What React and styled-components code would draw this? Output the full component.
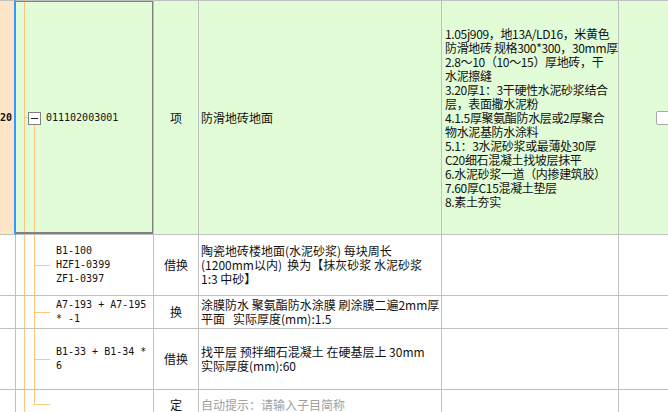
import React from "react";
import styled, { createGlobalStyle, css } from "styled-components";

const GlobalStyle = createGlobalStyle`
  html, body {
    margin: 0;
    padding: 0;
    background: #ffffff;
    overflow: hidden;
  }
  body {
    font-family: "Noto Sans CJK SC", "Liberation Sans", sans-serif;
    font-size: 12px;
    color: #111;
  }
`;

const GRID = "#c0c0c0";
const TREE = "#ffc77d";
const GREEN = "#e1fcd7";

const Sheet = styled.div`
  width: 700px;
  display: flex;
  flex-direction: column;
`;

const Row = styled.div`
  display: grid;
  grid-template-columns: 16px 138px 45px 243px 177px 81px;
  height: ${p => p.$h}px;
  background: ${p => (p.$current ? GREEN : "#ffffff")};
`;

const Cell = styled.div`
  box-sizing: border-box;
  border-right: 1px solid ${GRID};
  border-bottom: 1px solid ${GRID};
  border-top: ${p => (p.$top ? `1px solid ${GRID}` : "none")};
  display: flex;
  align-items: center;
  overflow: hidden;
  line-height: 14px;
  white-space: pre;
`;

const NumCell = styled(Cell)`
  justify-content: flex-end;
  padding-right: 2px;
  font-family: "DejaVu Sans Mono", monospace;
  font-size: 10px;
  font-weight: bold;
  ${p =>
    p.$current &&
    css`
      background: #ffe5c7;
      border-right: 2px solid #3399ff;
    `}
`;

const line = (x, y, w, h) =>
  `linear-gradient(${TREE}, ${TREE}) ${x} ${y} / ${w} ${h} no-repeat`;

const CodeCell = styled(Cell)`
  position: relative;
  font-family: "DejaVu Sans Mono", "Noto Sans CJK SC", monospace;
  font-size: 10px;
  padding-left: ${p => (p.$parent ? 12 : 40)}px;
  background: ${p =>
    p.$parent
      ? [
          line("8px", "0", "1px", "100%"),
          line("18px", "123px", "1px", "100%"),
          line("8px", "116px", "4px", "1px"),
        ].join(", ")
      : [
          line("8px", "0", "1px", "100%"),
          line("18px", "0", "1px", p.$last ? "50%" : "100%"),
          line("18px", "50%", "16px", "1px"),
        ].join(", ")};
  ${p =>
    p.$selected &&
    css`
      &::after {
        content: "";
        position: absolute;
        left: 0;
        top: -1px;
        right: -1px;
        bottom: 0;
        border: 2px solid #808080;
        border-left: none;
      }
    `}
`;

const ExpandBox = styled.span`
  box-sizing: border-box;
  width: 13px;
  height: 13px;
  border: 1px solid #808080;
  background: #ffffff;
  display: flex;
  align-items: center;
  justify-content: center;
  margin-right: 5px;
  margin-top: 1px;

  &::before {
    content: "";
    width: 7px;
    height: 1px;
    background: #222;
  }
`;

const TypeCell = styled(Cell)`
  justify-content: center;
`;

const TextCell = styled(Cell)`
  padding-left: ${p => p.$pad || 2}px;
  color: ${p => (p.$hint ? "#a0a0a0" : "#111")};
  letter-spacing: ${p => p.$tight ? "-0.35px" : "normal"};
`;

const ExtraCell = styled(Cell)`
  padding-left: 37px;
  border-right: none;
`;

const Check = styled.span`
  box-sizing: border-box;
  width: 16px;
  height: 14px;
  border: 1px solid #a8a8a8;
  border-radius: 2px;
  background: #ffffff;
`;

const Lines = ({ text }) => <div>{text.join("\n")}</div>;

const features = [
  "1.05j909，地13A/LD16，米黄色",
  "防滑地砖 规格300*300，30mm厚",
  "2.8～10（10～15）厚地砖，干",
  "水泥擦缝",
  "3.20厚1：3干硬性水泥砂浆结合",
  "层，表面撒水泥粉",
  "4.1.5厚聚氨酯防水层或2厚聚合",
  "物水泥基防水涂料",
  "5.1：3水泥砂浆或最薄处30厚",
  "C20细石混凝土找坡层抹平",
  "6.水泥砂浆一道（内掺建筑胶）",
  "7.60厚C15混凝土垫层",
  "8.素土夯实",
];

const children = [
  {
    h: 61,
    code: ["B1-100", "HZF1-0399", "ZF1-0397"],
    type: "借换",
    name: [
      "陶瓷地砖楼地面(水泥砂浆) 每块周长",
      "(1200mm以内)  换为【抹灰砂浆 水泥砂浆",
      "1:3 中砂】",
    ],
  },
  {
    h: 33,
    code: ["A7-193 + A7-195", "* -1"],
    type: "换",
    name: ["涂膜防水 聚氨酯防水涂膜 刷涂膜二遍2mm厚", "平面   实际厚度(mm):1.5"],
  },
  {
    h: 61,
    code: ["B1-33 + B1-34 *", "6"],
    type: "借换",
    name: ["找平层 预拌细石混凝土 在硬基层上 30mm", "实际厚度(mm):60"],
  },
  { h: 30, code: [], type: "定", name: ["自动提示：请输入子目简称"], hint: true, last: true },
];

export default function App() {
  return (
    <>
      <GlobalStyle />
      <Sheet>
        <Row $h={235} $current>
          <NumCell $top $current>20</NumCell>
          <CodeCell $top $parent $selected>
            <ExpandBox />
            <span>011102003001</span>
          </CodeCell>
          <TypeCell $top>项</TypeCell>
          <TextCell $top>防滑地砖地面</TextCell>
          <TextCell $top $pad={3} $tight>
            <Lines text={features} />
          </TextCell>
          <ExtraCell $top>
            <Check />
          </ExtraCell>
        </Row>
        {children.map((c, i) => (
          <Row key={i} $h={c.h}>
            <NumCell />
            <CodeCell $last={c.last}>
              <Lines text={c.code} />
            </CodeCell>
            <TypeCell>{c.type}</TypeCell>
            <TextCell $hint={c.hint}>
              <Lines text={c.name} />
            </TextCell>
            <TextCell />
            <ExtraCell />
          </Row>
        ))}
      </Sheet>
    </>
  );
}
